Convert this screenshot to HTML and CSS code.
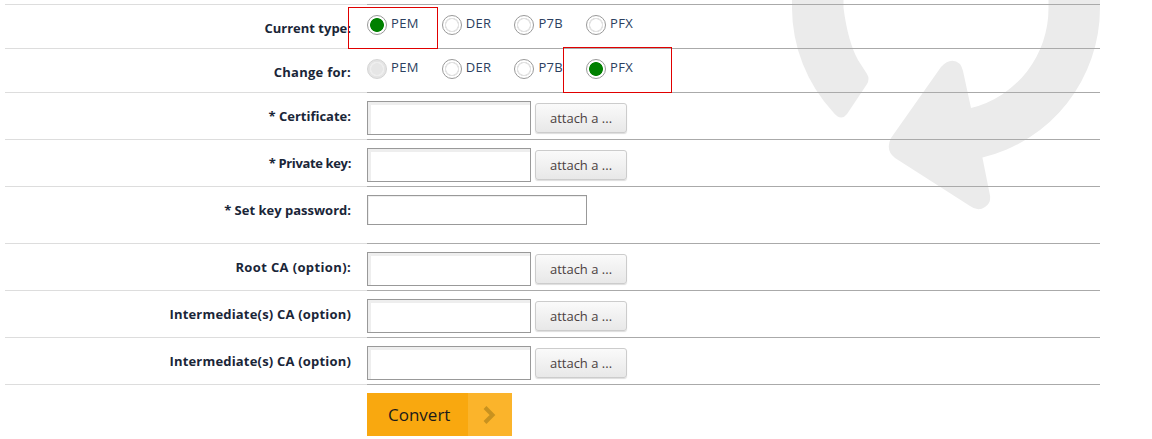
FILE: index.html
```html
<!DOCTYPE html>
<html lang="en">
<head>
<meta charset="utf-8">
<title>Convert certificate</title>
<link rel="stylesheet" href="styles.css">
</head>
<body>
<svg class="watermark" width="1152" height="439" viewBox="0 0 1152 439" aria-hidden="true">
  <path d="M792,0 L792,8 A154,154 0 0 0 833,112 Q841,122 847,114 L867,84 Q870,79 867,74 L858,60 Q848,42 843.500,8 L843.500,0 Z"/>
  <path d="M1100,0 L1100,8 A154,154 0 0 1 982.400,157.600 L989.500,193 Q992,203 985,207 Q978,212 970,206 L895,158 Q885,150 891,138 L941,67 Q951,56 960,64 Q962,67 963,71 L971,108 A102.500,102.500 0 0 0 1048.500,8 L1048.500,0 Z"/>
</svg>
<form class="form">
  <div class="row first">
    <div class="label">Current type:</div>
    <div class="control radios">
      <label class="radio"><input type="radio" name="cur" checked>PEM</label>
      <label class="radio"><input type="radio" name="cur">DER</label>
      <label class="radio"><input type="radio" name="cur">P7B</label>
      <label class="radio"><input type="radio" name="cur">PFX</label>
    </div>
  </div>
  <div class="row">
    <div class="label roomy">Change for:</div>
    <div class="control radios">
      <label class="radio"><input type="radio" name="to" disabled>PEM</label>
      <label class="radio"><input type="radio" name="to">DER</label>
      <label class="radio"><input type="radio" name="to">P7B</label>
      <label class="radio"><input type="radio" name="to" checked>PFX</label>
    </div>
  </div>
  <div class="row">
    <div class="label">* Certificate:</div>
    <div class="control files"><input class="text" type="text"><button class="attach" type="button">attach a ...</button></div>
  </div>
  <div class="row">
    <div class="label tight">* Private key:</div>
    <div class="control files"><input class="text" type="text"><button class="attach" type="button">attach a ...</button></div>
  </div>
  <div class="row tall">
    <div class="label">* Set key password:</div>
    <div class="control"><input class="text password" type="password"></div>
  </div>
  <div class="row">
    <div class="label loose">Root CA (option):</div>
    <div class="control files"><input class="text" type="text"><button class="attach" type="button">attach a ...</button></div>
  </div>
  <div class="row">
    <div class="label wide">Intermediate(s) CA (option)</div>
    <div class="control files"><input class="text" type="text"><button class="attach" type="button">attach a ...</button></div>
  </div>
  <div class="row">
    <div class="label wide">Intermediate(s) CA (option)</div>
    <div class="control files"><input class="text" type="text"><button class="attach" type="button">attach a ...</button></div>
  </div>
  <div class="actions">
    <button class="convert" type="button">
      <span class="convert-text">Convert</span>
      <span class="convert-arrow">
        <svg width="14" height="18" viewBox="0 0 14 18" aria-hidden="true"><path d="M2,1.500 L9.500,9 L2,16.500" fill="none" stroke="#c8921f" stroke-width="4"/></svg>
      </span>
    </button>
  </div>
</form>
<div class="mark mark-a"></div>
<div class="mark mark-b"></div>
</body>
</html>
```
FILE: styles.css
```css
* { box-sizing: border-box; }
html, body { margin: 0; height: 439px; overflow: hidden; background: #fff; }
body { position: relative; font-family: "Open Sans", sans-serif; font-size: 13px; line-height: 18px; color: #1f2d3f; }
.watermark { position: absolute; left: 0; top: 0; }
.watermark path { fill: #ebebeb; }
.form { position: relative; width: 1095px; margin: 4px 0 0 5px; }
.row { display: grid; grid-template-columns: 362px 1fr; min-height: 47px; }
.row .label { padding: 14px 16px 0 0; text-align: right; font-weight: 700; color: #1a2638; border-bottom: 1px solid #ddd; }
.row .label.tight { letter-spacing: -0.36px; }
.row .label.roomy { letter-spacing: 0.27px; }
.row .label.wide { letter-spacing: 0.19px; }
.row .label.loose { letter-spacing: 0.37px; }
.row .control { border-bottom: 1px solid #aaa; padding-top: 8px; }
.row.first { min-height: 45px; }
.row.first .label { border-top: 1px solid #ddd; }
.row.first .control { border-top: 1px solid #aaa; }
.row.tall { min-height: 57px; }
.radios { display: flex; gap: 23px; min-height: 44px; padding-top: 9px !important; }
.row:nth-child(2) { min-height: 44px; }
.radio { display: flex; gap: 4px; height: 18px; color: #2c4060; letter-spacing: 0.33px; }
.radio input { appearance: none; width: 20px; height: 20px; margin: 1px 0 0; border: 1px solid #999; border-radius: 50%; background: radial-gradient(circle, #fff 5.500px, #e2e2e2 6px, #e2e2e2 7px, #fff 7.500px); }
.radio input:checked { background: radial-gradient(circle, #008000 6.500px, #fff 7.300px); }
.radio input:disabled { border-color: #d4d4d4; background: radial-gradient(circle, #e6e6e6 5.500px, #eee 6px, #eee 7px, #e4e4e4 7.500px); }
.files { display: flex; align-items: flex-start; gap: 4px; }
.text { display: block; width: 164px; height: 34px; margin: 0; border: 1px solid #999; background: #fff; box-shadow: inset 3px 3px 0 #eee; }
.password { width: 220px; height: 30px; box-shadow: inset 1px 1px 0 #eee; }
.attach { width: 92px; height: 30px; margin-top: 2px; padding: 0; border: 1px solid #ccc; border-radius: 3px; background: linear-gradient(#fafafa, #e8e8e8); font: 13px/18px "Open Sans", sans-serif; color: #4a4040; box-shadow: 0 1px 1px #ddd; }
.actions { padding: 8px 0 0 362px; }
.convert { display: flex; width: 145px; height: 43px; padding: 0; border: 0; background: none; font: 17px/43px "Open Sans", sans-serif; color: #1b1b1b; }
.convert-text { width: 101px; height: 43px; padding-left: 21px; background: #f9a80f; text-align: left; }
.convert-arrow { display: flex; width: 44px; height: 43px; align-items: center; justify-content: center; background: #fbb42b; }
.mark { position: absolute; border: 1px solid #e00000; }
.mark-a { left: 348px; top: 7px; width: 90px; height: 42px; }
.mark-b { left: 563px; top: 47px; width: 109px; height: 46px; }
```
